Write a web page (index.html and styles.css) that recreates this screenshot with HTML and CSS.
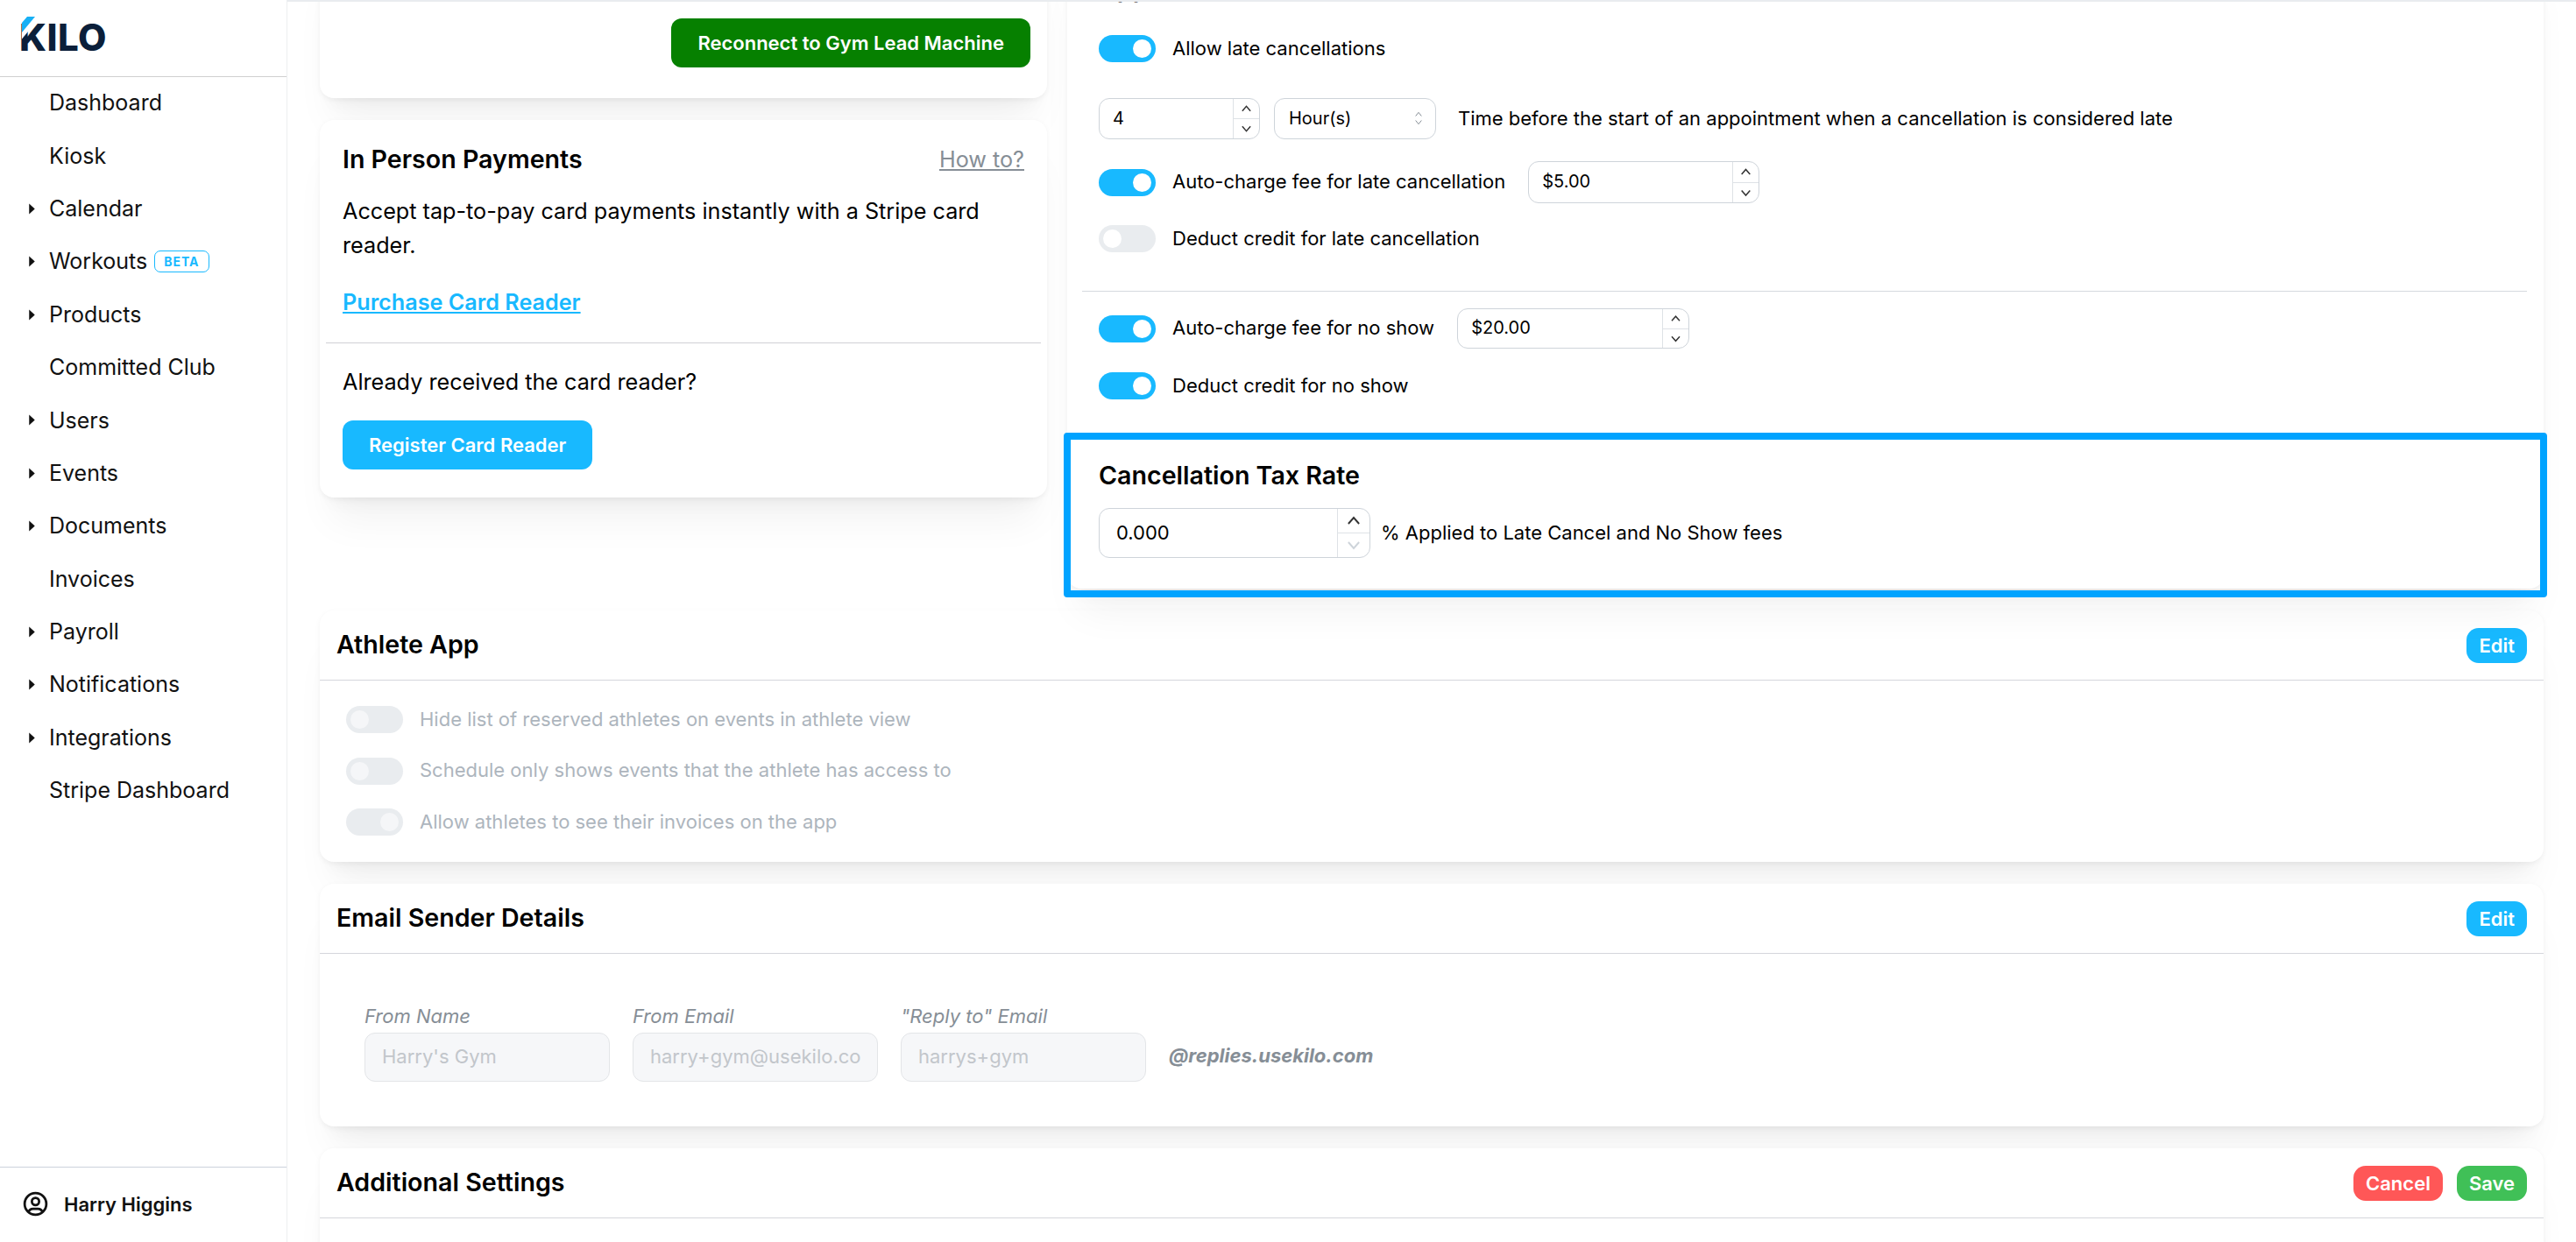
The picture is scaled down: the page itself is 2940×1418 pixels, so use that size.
FILE: index.html
```html
<!DOCTYPE html>
<html>
<head>
  <title>Settings</title>
  <meta charset="utf-8">
  <link rel="stylesheet" href="styles.css">
</head>
<body>
  <svg class="defs" width="0" height="0">
    <symbol id="up" viewBox="0 0 12 12"><path d="M2.5 8l3.5 -4l3.5 4" fill="none" stroke="currentColor" stroke-width="1.1"/></symbol>
    <symbol id="down" viewBox="0 0 12 12"><path d="M2.5 4l3.5 4l3.5 -4" fill="none" stroke="currentColor" stroke-width="1.1"/></symbol>
    <symbol id="caret" viewBox="0 0 6 12"><path d="M0 0.5l6 5.5l-6 5.5z"/></symbol>
  </svg>

  <div class="app">
    <aside class="sidebar">
      <div class="logo-wrap">
        <svg class="logo" width="110" height="50" viewBox="0 -6 110 50">
          <text x="2" y="38.5" class="logo-text">KILO</text>
          <polygon points="5,8 5,25.5 19.5,8" fill="#fff"/>
          <polygon points="11,0 20,0 5,18 5,7" fill="#18b0f5"/>
        </svg>
      </div>

      <nav class="nav">
        <a class="nav-item">Dashboard</a>
        <a class="nav-item">Kiosk</a>
        <a class="nav-item has-sub"><svg class="caret"><use href="#caret"/></svg>Calendar</a>
        <a class="nav-item has-sub"><svg class="caret"><use href="#caret"/></svg>Workouts <span class="beta">BETA</span></a>
        <a class="nav-item has-sub"><svg class="caret"><use href="#caret"/></svg>Products</a>
        <a class="nav-item">Committed Club</a>
        <a class="nav-item has-sub"><svg class="caret"><use href="#caret"/></svg>Users</a>
        <a class="nav-item has-sub"><svg class="caret"><use href="#caret"/></svg>Events</a>
        <a class="nav-item has-sub"><svg class="caret"><use href="#caret"/></svg>Documents</a>
        <a class="nav-item">Invoices</a>
        <a class="nav-item has-sub"><svg class="caret"><use href="#caret"/></svg>Payroll</a>
        <a class="nav-item has-sub"><svg class="caret"><use href="#caret"/></svg>Notifications</a>
        <a class="nav-item has-sub"><svg class="caret"><use href="#caret"/></svg>Integrations</a>
        <a class="nav-item">Stripe Dashboard</a>
      </nav>

      <div class="user">
        <svg class="user-icon" viewBox="0 0 24 24" fill="none" stroke="#111" stroke-width="2">
          <circle cx="12" cy="12" r="9"/>
          <circle cx="12" cy="10" r="3"/>
          <path d="M6.168 18.849a4 4 0 0 1 3.832 -2.849h4a4 4 0 0 1 3.831 2.855"/>
        </svg>
        <span>Harry Higgins</span>
      </div>
    </aside>

    <main class="main">
      <div class="content">
        <div class="top-row">
          <div class="left-col">
            <section class="card connect-card">
              <button class="btn-large btn-green" type="button">Reconnect to Gym Lead Machine</button>
            </section>

            <section class="card payments-card">
              <div class="payments-top">
                <div class="payments-head">
                  <h2>In Person Payments</h2>
                  <a class="how-to">How to?</a>
                </div>
                <p>Accept tap-to-pay card payments instantly with a Stripe card reader.</p>
                <a class="purchase">Purchase Card Reader</a>
              </div>
              <div class="payments-bottom">
                <p>Already received the card reader?</p>
                <button class="btn-large btn-blue" type="button">Register Card Reader</button>
              </div>
            </section>
          </div>

          <section class="card rules-card">
            <h2 class="rules-title">Appointments</h2>

            <div class="row row-a">
              <span class="switch on"></span>
              <label>Allow late cancellations</label>
            </div>

            <div class="row row-b">
              <div class="number w-hours">
                <input type="text" value="4">
                <div class="spin"><svg><use href="#up"/></svg><svg><use href="#down"/></svg></div>
              </div>
              <div class="select">
                <span>Hour(s)</span>
                <svg class="updown" viewBox="0 0 12 24"><path d="M2 9l4 -5l4 5M2 15l4 5l4 -5" fill="none" stroke="#868e96" stroke-width="1.2"/></svg>
              </div>
              <label class="row-b-label">Time before the start of an appointment when a cancellation is considered late</label>
            </div>

            <div class="row row-c">
              <span class="switch on"></span>
              <label>Auto-charge fee for late cancellation</label>
              <div class="number w-fee-late">
                <input type="text" value="$5.00">
                <div class="spin"><svg><use href="#up"/></svg><svg><use href="#down"/></svg></div>
              </div>
            </div>

            <div class="row row-d">
              <span class="switch"></span>
              <label>Deduct credit for late cancellation</label>
            </div>

            <hr class="rule">

            <div class="row row-e">
              <span class="switch on"></span>
              <label>Auto-charge fee for no show</label>
              <div class="number w-fee-noshow">
                <input type="text" value="$20.00">
                <div class="spin"><svg><use href="#up"/></svg><svg><use href="#down"/></svg></div>
              </div>
            </div>

            <div class="row row-f">
              <span class="switch on"></span>
              <label>Deduct credit for no show</label>
            </div>

            <div class="tax">
              <h2>Cancellation Tax Rate</h2>
              <div class="row tax-row">
                <div class="number w-tax">
                  <input type="text" value="0.000">
                  <div class="spin"><svg><use href="#up"/></svg><svg class="off"><use href="#down"/></svg></div>
                </div>
                <label>% Applied to Late Cancel and No Show fees</label>
              </div>
            </div>
            <div class="highlight"></div>
          </section>
        </div>

        <section class="card">
          <div class="card-head">
            <h2>Athlete App</h2>
            <button class="btn-small btn-blue" type="button">Edit</button>
          </div>
          <div class="athlete-body">
            <div class="row disabled"><span class="switch"></span><label>Hide list of reserved athletes on events in athlete view</label></div>
            <div class="row disabled"><span class="switch"></span><label>Schedule only shows events that the athlete has access to</label></div>
            <div class="row disabled"><span class="switch right"></span><label>Allow athletes to see their invoices on the app</label></div>
          </div>
        </section>

        <section class="card">
          <div class="card-head">
            <h2>Email Sender Details</h2>
            <button class="btn-small btn-blue" type="button">Edit</button>
          </div>
          <div class="email-body">
            <div class="field"><label>From Name</label><input type="text" value="Harry's Gym" disabled></div>
            <div class="field"><label>From Email</label><input type="text" value="harry+gym@usekilo.com" disabled></div>
            <div class="field"><label>"Reply to" Email</label><input type="text" value="harrys+gym" disabled></div>
            <span class="domain">@replies.usekilo.com</span>
          </div>
        </section>

        <section class="card">
          <div class="card-head">
            <h2>Additional Settings</h2>
            <div class="head-actions">
              <button class="btn-small btn-red" type="button">Cancel</button>
              <button class="btn-small btn-save" type="button">Save</button>
            </div>
          </div>
          <div class="additional-body"></div>
        </section>
      </div>
    </main>
  </div>
</body>
</html>
```

FILE: styles.css
```css
* {
  box-sizing: border-box;
}
html, body {
  margin: 0;
  height: 100%;
  overflow: hidden;
}
body {
  font-family: Inter, "Liberation Sans", sans-serif;
  color: #000;
  background: #fff;
}
.defs {
  position: absolute;
}
.app {
  display: flex;
  height: 100vh;
}

/* sidebar */
.sidebar {
  width: 328px;
  flex: none;
  display: flex;
  flex-direction: column;
  background: #fff;
  border-right: 1px solid #eceef0;
  position: relative;
  z-index: 2;
}
.logo-wrap {
  height: 88px;
  padding: 13px 0 0 20px;
  border-bottom: 1px solid #cfcfcf;
}
.logo {
  display: block;
}
.logo-text {
  font-family: Inter, sans-serif;
  font-size: 42px;
  font-weight: 800;
  fill: #0b1f3a;
  letter-spacing: 0.5px;
}
.nav {
  flex: 1;
}
.nav-item {
  display: flex;
  align-items: center;
  height: 60.4px;
  padding: 0 0 2px 56px;
  font-size: 25px;
  color: #111;
  position: relative;
}
.caret {
  position: absolute;
  left: 33px;
  top: 23px;
  width: 7px;
  height: 13px;
  fill: #111;
}
.beta {
  margin-left: 8px;
  padding: 0 10px;
  height: 25px;
  line-height: 23px;
  border: 1px solid #18b9ff;
  border-radius: 7px;
  color: #18b9ff;
  font-size: 14px;
  font-weight: 700;
  letter-spacing: 1px;
}
.user {
  height: 86px;
  display: flex;
  align-items: center;
  gap: 16px;
  padding: 0 0 2px 24px;
  border-top: 1px solid #ccd2dc;
  font-size: 22px;
  font-weight: 600;
  color: #111;
}
.user-icon {
  width: 33px;
  height: 33px;
}

/* main */
.main {
  flex: 1;
  min-width: 0;
  overflow: hidden;
  background: #fff;
  border-top: 2px solid #e9ecef;
}
.content {
  padding: 0 37px;
  margin-top: -62px;
  display: flex;
  flex-direction: column;
  gap: 25px;
}
.card {
  background: #fff;
  border-radius: 16px;
  box-shadow: 0 2px 6px rgba(0, 0, 0, 0.05), 0 40px 46px -14px rgba(0, 0, 0, 0.05), 0 20px 20px -14px rgba(0, 0, 0, 0.04);
}
.card h2 {
  margin: 0;
  font-size: 28.6px;
  line-height: 34px;
  font-weight: 600;
}
.top-row {
  display: flex;
  gap: 23px;
  align-items: flex-start;
}
.left-col {
  width: 830px;
  flex: none;
  display: flex;
  flex-direction: column;
  gap: 25px;
}
.connect-card {
  display: flex;
  justify-content: flex-end;
  padding: 81px 19px 35px;
}
.btn-large {
  height: 56px;
  border: 0;
  border-radius: 12px;
  color: #fff;
  font-family: inherit;
  font-size: 22px;
  font-weight: 600;
  padding: 0 30px;
}
.btn-green {
  background: #068000;
}
.btn-blue {
  background: #18b9ff;
}
.payments-top {
  padding: 28px 19px 26px;
  border-bottom: 1px solid #d0d0d5;
  margin: 0 7px;
}
.payments-head {
  display: flex;
  justify-content: space-between;
  align-items: center;
}
.how-to {
  color: #868e96;
  font-size: 25.2px;
  text-decoration: underline;
}
.card p {
  margin: 0;
  font-size: 25.2px;
  line-height: 39px;
}
.payments-top p {
  margin-top: 23px;
}
.purchase {
  display: block;
  margin-top: 26px;
  font-size: 25.2px;
  line-height: 39px;
  font-weight: 600;
  color: #18b9ff;
  text-decoration: underline;
}
.payments-bottom {
  padding: 25px 26px 32px;
}
.payments-bottom .btn-large {
  display: block;
  margin-top: 24px;
}

/* right card */
.rules-card {
  flex: 1;
  min-width: 0;
  position: relative;
  padding: 30px 19px 35px 36px;
}
.rules-title {
  margin-bottom: 36px !important;
}
.row {
  display: flex;
  align-items: center;
  font-size: 22px;
}
.row label {
  margin-left: 19px;
  padding-bottom: 2px;
}
.row-b {
  margin-top: 41px;
}
.row-c, .row-d {
  margin-top: 25px;
}
.row-e {
  margin-top: 19px;
}
.row-f {
  margin-top: 27px;
}
.rule {
  margin: 44px 0 0 -19px;
  border: 0;
  border-top: 1px solid #d5d9de;
}
.switch {
  width: 65px;
  height: 31px;
  flex: none;
  border-radius: 16px;
  background: #e9ecef;
  position: relative;
}
.switch::after {
  content: "";
  position: absolute;
  top: 5px;
  left: 5px;
  width: 21px;
  height: 21px;
  border-radius: 50%;
  background: #fff;
}
.switch.on {
  background: #18b9ff;
}
.switch.on::after, .switch.right::after {
  left: auto;
  right: 5px;
}
.number {
  position: relative;
  display: flex;
  height: 47px;
  background: #fff;
  border: 1.5px solid #ced4da;
  border-radius: 12px;
  overflow: hidden;
}
.number input {
  flex: 1;
  min-width: 0;
  border: 0;
  outline: 0;
  padding: 0 0 2px 15px;
  font-family: inherit;
  font-size: 20px;
  background: transparent;
  color: #000;
}
.spin {
  width: 30px;
  flex: none;
  display: flex;
  flex-direction: column;
  border-left: 1px solid #dee2e6;
  color: #333;
}
.spin svg {
  flex: 1;
  width: 100%;
  min-height: 0;
  padding: 3px 0;
}
.spin svg + svg {
  border-top: 1px solid #dee2e6;
}
.spin .off {
  color: #ced4da;
}
.w-hours {
  width: 184px;
}
.select {
  width: 185px;
  height: 47px;
  margin-left: 16px;
  padding: 0 14px 1px 16px;
  display: flex;
  justify-content: space-between;
  align-items: center;
  border: 1.5px solid #ced4da;
  border-radius: 12px;
  font-size: 20px;
}
.updown {
  width: 10px;
  height: 22px;
}
.row-b-label {
  margin-left: 25px !important;
}
.w-fee-late {
  width: 264px;
  height: 48px;
  margin-left: 26px;
}
.w-fee-noshow {
  width: 265px;
  height: 46px;
  margin-left: 26px;
}
.tax {
  margin-top: 70px;
}
.tax-row {
  margin-top: 20px;
}
.tax-row label {
  margin-left: 12px;
}
.w-tax {
  width: 310px;
  height: 57px;
}
.w-tax input {
  font-size: 22px;
  padding-left: 19px;
}
.w-tax .spin {
  width: 37px;
}
.highlight {
  position: absolute;
  left: -4px;
  right: -4px;
  bottom: -10px;
  height: 188px;
  border: 8px solid #00a3ff;
  border-radius: 4px;
  pointer-events: none;
}

/* full width cards */
.card-head {
  height: 80px;
  padding: 0 19px;
  display: flex;
  justify-content: space-between;
  align-items: center;
  border-bottom: 1px solid #d5d6dc;
}
.card-head h2 {
  margin-bottom: 2px;
}
.btn-small {
  height: 40px;
  border: 0;
  border-radius: 14px;
  padding: 0 14px;
  color: #fff;
  font-family: inherit;
  font-size: 22px;
  font-weight: 600;
}
.btn-red {
  background: #ff5757;
}
.btn-save {
  background: #40c057;
}
.head-actions {
  display: flex;
  gap: 16px;
}
.athlete-body {
  padding: 29px 30px 30px;
  display: flex;
  flex-direction: column;
  gap: 27.5px;
}
.disabled {
  color: #adb5bd;
}
.disabled .switch::after {
  background: #f5f6f8;
}
.email-body {
  display: flex;
  align-items: flex-end;
  gap: 26px;
  padding: 57px 50px 51px 51px;
}
.field {
  display: flex;
  flex-direction: column;
  gap: 5px;
}
.field label {
  font-size: 22px;
  font-style: italic;
  color: #868e96;
  line-height: 28px;
}
.field input {
  width: 280px;
  height: 56px;
  padding: 0 19px 3px;
  border: 1.5px solid #e3e5e8;
  border-radius: 12px;
  background: #f6f7f9;
  font-family: inherit;
  font-size: 22px;
  color: #c2c6cb;
  outline: 0;
}
.domain {
  height: 56px;
  line-height: 53px;
  font-size: 22px;
  font-weight: 700;
  font-style: italic;
  color: #868e96;
}
.additional-body {
  height: 200px;
}
```
